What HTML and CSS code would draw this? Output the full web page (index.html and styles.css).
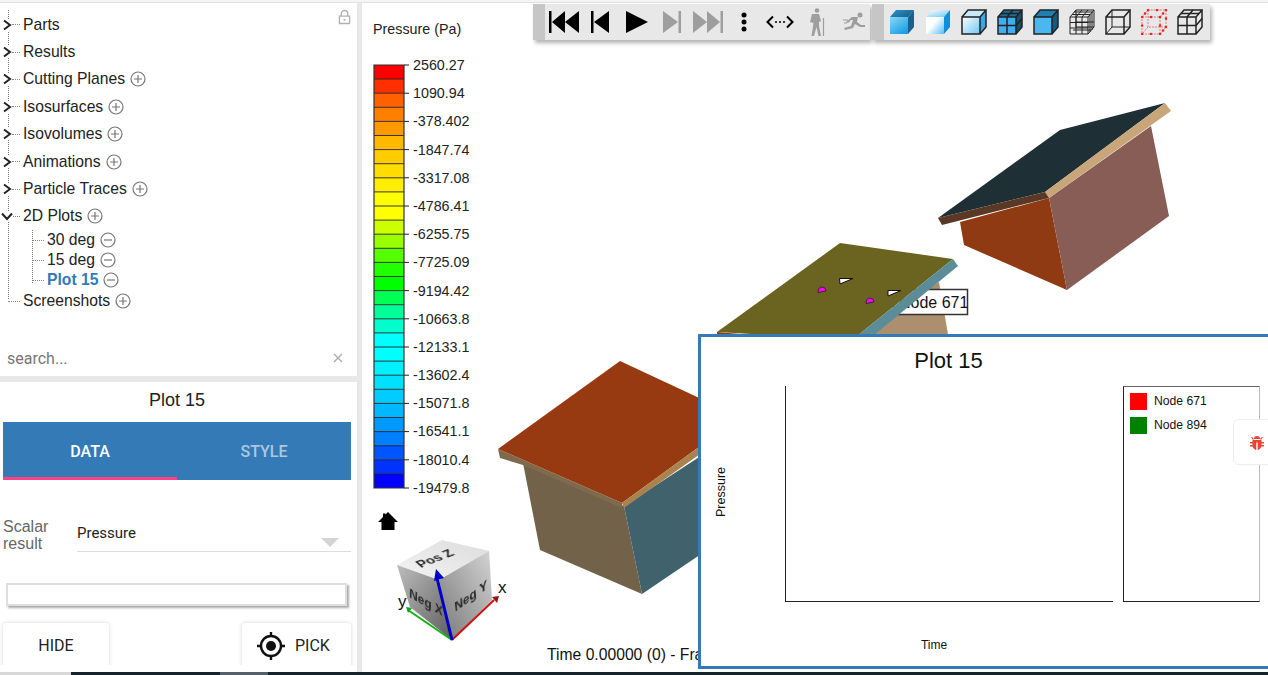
FILE: index.html
```html
<!DOCTYPE html>
<html lang="en">
<head>
<meta charset="utf-8">
<title>Plot 15</title>
<link rel="stylesheet" href="styles.css">
</head>
<body>
<svg class="defs" width="0" height="0" aria-hidden="true">
  <defs>
    <linearGradient id="gA" x1="0" y1="0" x2="0.7" y2="1"><stop offset="0" stop-color="#8ad6f8"/><stop offset="1" stop-color="#1c9fe4"/></linearGradient>
    <linearGradient id="gB" x1="0" y1="0" x2="1" y2="0.6"><stop offset="0" stop-color="#2f96c8"/><stop offset="1" stop-color="#17638c"/></linearGradient>
    <linearGradient id="gC" x1="0" y1="0.2" x2="1" y2="1"><stop offset="0" stop-color="#ffffff"/><stop offset="0.35" stop-color="#ffffff"/><stop offset="1" stop-color="#58bdf2"/></linearGradient>
    <linearGradient id="gD" x1="0" y1="0" x2="1" y2="1"><stop offset="0" stop-color="#ffffff"/><stop offset="1" stop-color="#6cc6f3"/></linearGradient>
    <linearGradient id="cubeTop" x1="0" y1="1" x2="1" y2="0"><stop offset="0" stop-color="#f4f4f4"/><stop offset="1" stop-color="#dcdcdc"/></linearGradient>
    <linearGradient id="cubeLeft" x1="0" y1="0" x2="1" y2="1"><stop offset="0" stop-color="#bdbdbd"/><stop offset="1" stop-color="#5e5e5e"/></linearGradient>
    <linearGradient id="cubeRight" x1="1" y1="0" x2="0" y2="1"><stop offset="0" stop-color="#d4d4d4"/><stop offset="1" stop-color="#777777"/></linearGradient>
    <symbol id="wire" viewBox="0 0 26 26"><path d="M1 8H19V25H1ZM1 8 7 1H25L19 8M25 1V18L19 25"/></symbol>
  </defs>
</svg>

<div class="topline"></div>
<div class="main">
  <aside class="sidebar">
    <section class="tree-panel">
      <svg class="lock" viewBox="0 0 14 16"><path class="lock-s" d="M3.5 7V4.5a3.5 3.5 0 0 1 7 0V7M1.5 7h11v8h-11z"/><rect class="lock-f" x="6" y="10" width="2" height="2"/></svg>
      <ul class="tree">
        <li class="row"><svg class="chev" viewBox="0 0 9 12"><path d="M1 1.5 7 6 1 10.5"/></svg><span class="conn"></span><span>Parts</span></li>
        <li class="row"><svg class="chev" viewBox="0 0 9 12"><path d="M1 1.5 7 6 1 10.5"/></svg><span class="conn"></span><span>Results</span></li>
        <li class="row"><svg class="chev" viewBox="0 0 9 12"><path d="M1 1.5 7 6 1 10.5"/></svg><span class="conn"></span><span>Cutting Planes</span><svg class="act" viewBox="0 0 16 16"><circle cx="8" cy="8" r="7"/><path d="M4 8h8M8 4v8"/></svg></li>
        <li class="row"><svg class="chev" viewBox="0 0 9 12"><path d="M1 1.5 7 6 1 10.5"/></svg><span class="conn"></span><span>Isosurfaces</span><svg class="act" viewBox="0 0 16 16"><circle cx="8" cy="8" r="7"/><path d="M4 8h8M8 4v8"/></svg></li>
        <li class="row"><svg class="chev" viewBox="0 0 9 12"><path d="M1 1.5 7 6 1 10.5"/></svg><span class="conn"></span><span>Isovolumes</span><svg class="act" viewBox="0 0 16 16"><circle cx="8" cy="8" r="7"/><path d="M4 8h8M8 4v8"/></svg></li>
        <li class="row"><svg class="chev" viewBox="0 0 9 12"><path d="M1 1.5 7 6 1 10.5"/></svg><span class="conn"></span><span>Animations</span><svg class="act" viewBox="0 0 16 16"><circle cx="8" cy="8" r="7"/><path d="M4 8h8M8 4v8"/></svg></li>
        <li class="row"><svg class="chev" viewBox="0 0 9 12"><path d="M1 1.5 7 6 1 10.5"/></svg><span class="conn"></span><span>Particle Traces</span><svg class="act" viewBox="0 0 16 16"><circle cx="8" cy="8" r="7"/><path d="M4 8h8M8 4v8"/></svg></li>
        <li class="row"><svg class="chev" viewBox="0 0 12 9"><path d="M1 1.5 6 7 11 1.5"/></svg><span class="conn"></span><span>2D Plots</span><svg class="act" viewBox="0 0 16 16"><circle cx="8" cy="8" r="7"/><path d="M4 8h8M8 4v8"/></svg></li>
        <li>
          <ul class="subtree">
            <li class="subrow"><span class="subconn"></span><span>30 deg</span><svg class="act" viewBox="0 0 16 16"><circle cx="8" cy="8" r="7"/><path d="M4 8h8"/></svg></li>
            <li class="subrow"><span class="subconn"></span><span>15 deg</span><svg class="act" viewBox="0 0 16 16"><circle cx="8" cy="8" r="7"/><path d="M4 8h8"/></svg></li>
            <li class="subrow"><span class="subconn"></span><span class="current">Plot 15</span><svg class="act" viewBox="0 0 16 16"><circle cx="8" cy="8" r="7"/><path d="M4 8h8"/></svg></li>
          </ul>
        </li>
        <li class="row last"><span class="conn long"></span><span>Screenshots</span><svg class="act" viewBox="0 0 16 16"><circle cx="8" cy="8" r="7"/><path d="M4 8h8M8 4v8"/></svg></li>
      </ul>
      <div class="search"><span>search...</span><svg class="clear" viewBox="0 0 10 10"><path d="M1 1 9 9M9 1 1 9"/></svg></div>
    </section>

    <section class="detail">
      <h2 class="detail-title">Plot 15</h2>
      <div class="tabs">
        <div class="tab active">DATA</div>
        <div class="tab">STYLE</div>
      </div>
      <div class="field">
        <div class="field-label">Scalar<br>result</div>
        <div class="select"><span>Pressure</span><i class="caret"></i></div>
      </div>
      <div class="inputbar"></div>
      <div class="buttons">
        <div class="btn hide">HIDE</div>
        <div class="btn pick">
          <svg class="target" viewBox="0 0 28 28"><circle class="t-ring" cx="14" cy="14" r="10"/><circle cx="14" cy="14" r="5"/><path class="t-ring" d="M14 0v5M14 23v5M0 14h5M23 14h5"/></svg>
          <span>PICK</span>
        </div>
      </div>
    </section>
  </aside>

  <main class="viewport">
    <svg class="scene" viewBox="362 3 906 669">
      <!-- top right house -->
      <polygon fill="#8f3a13" points="960,222 1049,198 1067,290 964,245"/>
      <polygon fill="#875d55" points="1049,198 1151,126 1169,216 1067,290"/>
      <polygon fill="#1e2f36" points="1060,130 1165,103 1045,192 938,218"/>
      <polygon fill="#c9a67a" points="1165,103 1171,111 1049,198 1045,192"/>
      <polygon fill="#5a3826" points="938,218 1045,192 1049,198 942,225"/>
      <!-- middle house -->
      <polygon fill="#ab8f6e" points="939,282 949,340 850,340"/>
      <rect class="tag" x="893.500" y="289.500" width="74" height="25"/>
      <text class="tag-text" x="899" y="308">Node 671</text>
      <polygon fill="#8f3a13" points="717,332 740,334 730,340 717,340"/>
      <polygon fill="#6b6320" points="840,243 953,259 852,340 717,332"/>
      <polygon fill="#5b8d99" points="953,259 958,266 868,340 852,340"/>
      <polygon class="flag" points="839.500,278.500 853,278.500 840,284"/>
      <polygon class="flag" points="888,290.500 901,290.500 888,296"/>
      <path class="dot" d="M818 292.500Q818 287 822 287Q826 287 826 291Z"/>
      <path class="dot" d="M866 303.500Q866 298 870 298Q874 298 874 302Z"/>
      <!-- front house -->
      <polygon fill="#73624a" points="523,463 624,506 642,594 540,550"/>
      <polygon fill="#3f626c" points="624,506 710,450 710,548 642,594"/>
      <polygon fill="#7f6a4d" points="498,449 622,503 622,508 523,465 500,458"/>
      <polygon fill="#973a12" points="620,361 710,403 710,439 622,503 498,449"/>
      <polygon fill="#a9824f" points="622,503 710,439 710,447 624,508"/>
      <!-- home -->
      <path fill="#000" d="M388 512 398 522H394.500V530H381.500V522H378L383 517V513.500H385.500V514.500Z"/>
      <!-- nav cube -->
      <polygon fill="url(#cubeTop)" points="397,565 442,540 489,551 439,580"/>
      <polygon fill="url(#cubeLeft)" points="397,565 439,580 452,640 410,607"/>
      <polygon fill="url(#cubeRight)" points="439,580 489,551 492,600 452,640"/>
      <text class="cube-text" transform="matrix(0.93 -0.36 0.75 0.66 421 568)">Pos Z</text>
      <text class="cube-text" transform="matrix(0.88 0.5 -0.05 1 409 597)">Neg X</text>
      <text class="cube-text" transform="matrix(0.86 -0.62 0.1 1 455 612)">Neg Y</text>
      <path class="axis-g" d="M452 640 408 610"/>
      <polygon fill="#16a016" points="406,607 412,608 408,613"/>
      <path class="axis-r" d="M452 640 494 600"/>
      <polygon fill="#a01010" points="492,597 499,596 497,603"/>
      <path class="axis-b" d="M452 640 437 578"/>
      <polygon fill="#0000c8" points="436,569 444,578 434,581 "/>
      <text class="axis-text" x="498" y="593">x</text>
      <text class="axis-text" x="398" y="607">y</text>
    </svg>

    <div class="legend">
      <div class="legend-title">Pressure (Pa)</div>
      <div class="legend-body">
        <svg class="legend-bar" viewBox="0 0 36 425">
          <rect x="1" y="1" width="30" height="14.100" fill="#ff0000"/><rect x="1" y="15.100" width="30" height="14.100" fill="#ff3000"/><rect x="1" y="29.200" width="30" height="14.100" fill="#ff6000"/><rect x="1" y="43.300" width="30" height="14.100" fill="#ff8000"/><rect x="1" y="57.400" width="30" height="14.100" fill="#ff9900"/><rect x="1" y="71.500" width="30" height="14.100" fill="#ffb800"/><rect x="1" y="85.600" width="30" height="14.100" fill="#ffcc00"/><rect x="1" y="99.700" width="30" height="14.100" fill="#ffdd00"/><rect x="1" y="113.800" width="30" height="14.100" fill="#ffee00"/><rect x="1" y="127.900" width="30" height="14.100" fill="#ffff00"/><rect x="1" y="142" width="30" height="14.100" fill="#ffff00"/><rect x="1" y="156.100" width="30" height="14.100" fill="#ccff00"/><rect x="1" y="170.200" width="30" height="14.100" fill="#99ff00"/><rect x="1" y="184.300" width="30" height="14.100" fill="#55ff00"/><rect x="1" y="198.400" width="30" height="14.100" fill="#22ff00"/><rect x="1" y="212.500" width="30" height="14.100" fill="#00ff00"/><rect x="1" y="226.600" width="30" height="14.100" fill="#00ff55"/><rect x="1" y="240.700" width="30" height="14.100" fill="#00ff99"/><rect x="1" y="254.800" width="30" height="14.100" fill="#00ffcc"/><rect x="1" y="268.900" width="30" height="14.100" fill="#00ffff"/><rect x="1" y="283" width="30" height="14.100" fill="#00ffff"/><rect x="1" y="297.100" width="30" height="14.100" fill="#00f0ff"/><rect x="1" y="311.200" width="30" height="14.100" fill="#00e0ff"/><rect x="1" y="325.300" width="30" height="14.100" fill="#00ccff"/><rect x="1" y="339.400" width="30" height="14.100" fill="#00b8ff"/><rect x="1" y="353.500" width="30" height="14.100" fill="#0099ff"/><rect x="1" y="367.600" width="30" height="14.100" fill="#0080ff"/><rect x="1" y="381.700" width="30" height="14.100" fill="#0055ff"/><rect x="1" y="395.800" width="30" height="14.100" fill="#0033ff"/><rect x="1" y="409.900" width="30" height="14.100" fill="#0000ff"/>
          <path class="band-lines" d="M1 15.100H31M1 29.200H31M1 43.300H31M1 57.400H31M1 71.500H31M1 85.600H31M1 99.700H31M1 113.800H31M1 127.900H31M1 142H31M1 156.100H31M1 170.200H31M1 184.300H31M1 198.400H31M1 212.500H31M1 226.600H31M1 240.700H31M1 254.800H31M1 268.900H31M1 283H31M1 297.100H31M1 311.200H31M1 325.300H31M1 339.400H31M1 353.500H31M1 367.600H31M1 381.700H31M1 395.800H31M1 409.900H31"/>
          <path class="band-frame" d="M1 1H31V424H1Z"/>
          <path class="band-ticks" d="M31 1H36M31 29.200H36M31 57.400H36M31 85.600H36M31 113.800H36M31 142H36M31 170.200H36M31 198.400H36M31 226.600H36M31 254.800H36M31 283H36M31 311.200H36M31 339.400H36M31 367.600H36M31 395.800H36M31 424H36"/>
        </svg>
        <div class="legend-labels">
          <span>2560.27</span><span>1090.94</span><span>-378.402</span><span>-1847.74</span><span>-3317.08</span><span>-4786.41</span><span>-6255.75</span><span>-7725.09</span><span>-9194.42</span><span>-10663.8</span><span>-12133.1</span><span>-13602.4</span><span>-15071.8</span><span>-16541.1</span><span>-18010.4</span><span>-19479.8</span>
        </div>
      </div>
    </div>

    <div class="status">Time 0.00000 (0) - Frame 0</div>

    <div class="toolbars">
      <div class="toolbar play">
        <div class="handle"></div>
        <svg class="ti t1" viewBox="0 0 30 22"><path d="M0 0H2.500V22H0ZM3 11 16 0V22ZM16 11 30 0V22Z"/></svg>
        <svg class="ti t2" viewBox="0 0 18 22"><path d="M0 0H2.500V22H0ZM3 11 18 0V22Z"/></svg>
        <svg class="ti t3" viewBox="0 0 22 22"><path d="M0 0 22 11 0 22Z"/></svg>
        <svg class="ti t4 off" viewBox="0 0 18 22"><path d="M15.500 0H18V22H15.500ZM0 0 15 11 0 22Z"/></svg>
        <svg class="ti t5 off" viewBox="0 0 30 22"><path d="M27.500 0H30V22H27.500ZM0 0 14 11 0 22ZM14 0 27 11 14 22Z"/></svg>
        <svg class="ti t6" viewBox="0 0 8 20"><circle cx="4" cy="3" r="2.500"/><circle cx="4" cy="10" r="2.500"/><circle cx="4" cy="17" r="2.500"/></svg>
        <svg class="ti t7" viewBox="0 0 28 14"><path class="arrows" d="M7 1.500 1.500 7 7 12.500M21 1.500 26.500 7 21 12.500"/><circle cx="10" cy="7" r="1"/><circle cx="14" cy="7" r="1"/><circle cx="18" cy="7" r="1"/></svg>
        <svg class="ti t8 off" viewBox="0 0 16 28"><circle cx="8" cy="2.500" r="2.300"/><path d="M3 6h7l2 7-2 1v4l2 10H9.500L7.500 19 5 28H2.500L4.500 15 1 14Z"/><path class="pole" d="M14.500 10V28"/></svg>
        <svg class="ti t9 off" viewBox="0 0 22 20"><circle cx="17" cy="3" r="2.500"/><path d="M9 5h6l-1 5 4 3h4v2h-5l-5-3-2 4-8 2-1-2 7-2 2-6-2 0-3 3-2-1Z"/><path class="pole" d="M0 8H5M1 11H4"/></svg>
      </div>
      <div class="toolbar cubes">
        <div class="handle"></div>
        <svg class="ci c1" viewBox="0 0 26 26"><polygon fill="url(#gA)" points="1,8 19,8 19,25 1,25"/><polygon fill="url(#gB)" points="1,8 7,1 25,1 19,8"/><polygon fill="#17638c" points="19,8 25,1 25,18 19,25"/></svg>
        <svg class="ci c2" viewBox="0 0 26 26"><polygon fill="url(#gC)" points="1,8 19,8 19,25 1,25"/><polygon fill="url(#gD)" points="1,8 7,1 25,1 19,8"/><polygon fill="#0e8fdc" points="19,8 25,1 25,18 19,25"/></svg>
        <svg class="ci c3" viewBox="0 0 26 26"><polygon fill="url(#gD)" points="1,8 19,8 19,25 1,25"/><polygon fill="#c9e8f8" points="1,8 7,1 25,1 19,8"/><polygon fill="#39a8e8" points="19,8 25,1 25,18 19,25"/><use class="line" href="#wire"/></svg>
        <svg class="ci c4" viewBox="0 0 26 26"><polygon fill="#3cb0ee" points="1,8 19,8 19,25 1,25"/><polygon fill="#1a6d9a" points="1,8 7,1 25,1 19,8"/><polygon fill="#14506f" points="19,8 25,1 25,18 19,25"/><use class="line" href="#wire"/><path class="line" d="M1 16.500H19M10 8V25M4 4.500H22M16 1 10 8M19 16.500 25 9.500"/></svg>
        <svg class="ci c5" viewBox="0 0 26 26"><polygon fill="#4ab8ee" points="1,8 19,8 19,25 1,25"/><polygon fill="#1f7fb0" points="1,8 7,1 25,1 19,8"/><polygon fill="#125a80" points="19,8 25,1 25,18 19,25"/><use class="line" href="#wire"/></svg>
        <svg class="ci c6" viewBox="0 0 26 26"><use class="line thin" href="#wire"/><path class="line thin" d="M1 13.500H19M1 19H19M7 8V25M13 8V25M3 5.500H21M5 3H23M13 1 7 8M19 1 13 8M21 5.500V23M23 3V21M7 1V18H25M4 21 22 21M7 13H25"/></svg>
        <svg class="ci c7" viewBox="0 0 26 26"><use class="line" href="#wire"/><path class="line thin" d="M7 1V18H25M7 18 1 25"/></svg>
        <svg class="ci c8" viewBox="0 0 26 26"><use class="line red" href="#wire"/><path class="line red" d="M7 1V18H25M7 18 1 25"/><path class="line reddot" d="M1 8h.1M10 8h.1M19 8h.1M1 16.500h.1M19 16.500h.1M1 25h.1M10 25h.1M19 25h.1M7 1h.1M16 1h.1M25 1h.1M25 9.500h.1M25 18h.1M4 4.500h.1M22 4.500h.1M22 21.500h.1"/></svg>
        <svg class="ci c9" viewBox="0 0 26 26"><use class="line" href="#wire"/><path class="line" d="M1 16.500H19M10 8V25M4 4.500H22M16 1 10 8M19 16.500 25 9.500"/></svg>
      </div>
    </div>

    <div class="plot">
      <h3 class="plot-title">Plot 15</h3>
      <div class="plot-body">
        <div class="y-label">Pressure</div>
        <div class="chart"></div>
        <div class="plot-legend">
          <div class="entry"><i class="swatch red"></i>Node 671</div>
          <div class="entry"><i class="swatch green"></i>Node 894</div>
        </div>
      </div>
      <div class="x-label">Time</div>
    </div>

    <div class="bug">
      <svg viewBox="0 0 16 16"><path d="M5 4a3 3 0 0 1 6 0ZM3.500 5h9v2H15v1.500h-2.500V10H15v1.500h-2.700C11.800 13.500 10 15 8.700 15V7.500H7.300V15C6 15 4.200 13.500 3.700 11.500H1V10h2.500V8.500H1V7h2.500ZM2 2l1 0 2 2-1 1ZM14 2l-1 0-2 2 1 1Z"/></svg>
    </div>
  </main>
</div>
<div class="foot"><span class="f1"></span><span class="f2"></span><span class="f3"></span><span class="f4"></span></div>
</body>
</html>
```

FILE: styles.css
```css
* { box-sizing: border-box; }
html, body { margin: 0; padding: 0; }
body {
  width: 1268px;
  height: 675px;
  overflow: hidden;
  display: flex;
  flex-direction: column;
  background: #fff;
  font-family: "Liberation Sans", Arial, sans-serif;
  color: #222;
}
.defs { position: absolute; }
.topline { height: 3px; background: #f4f4f4; border-bottom: 1px solid #e2e2e2; flex: none; }
.main { flex: 1; display: flex; min-height: 0; }
.foot { height: 3px; flex: none; display: flex; }
.f1 { width: 71px; background: #d8d8d8; }
.f2 { width: 149px; background: #17232b; }
.f3 { width: 48px; background: #55606a; }
.f4 { flex: 1; background: #17232b; }

/* sidebar */
.sidebar {
  width: 362px;
  flex: none;
  border-right: 5px solid #e8e8e8;
  display: flex;
  flex-direction: column;
}
.tree-panel {
  flex: none;
  position: relative;
  display: flex;
  flex-direction: column;
  border-bottom: 6px solid #e8e8e8;
  height: 379px;
}
.lock { position: absolute; left: 338px; top: 6px; width: 13px; height: 16px; }
.lock-s { fill: none; stroke: #b0b0b0; stroke-width: 1.400; }
.lock-f { fill: #b0b0b0; }
.tree { list-style: none; margin: 0; padding: 8px 0 0; position: relative; font-size: 15.700px; }
.tree::before {
  content: "";
  position: absolute;
  left: 8px;
  top: 7px;
  height: 289px;
  border-left: 1px dotted #777;
}
.row { height: 27.400px; display: flex; align-items: center; position: relative; }
.row.last { height: 22px; }
.chev {
  width: 9px;
  height: 12px;
  margin-left: 3px;
  flex: none;
  background: #fff;
}
.chev path { fill: none; stroke: #222; stroke-width: 2; }
.row:nth-child(8) .chev { width: 12px; height: 9px; margin-left: 1px; }
.row:nth-child(8) .conn { width: 7px; }
.conn { width: 8px; height: 0; margin: 0 3px 0 0; border-top: 1px dotted #888; flex: none; }
.conn.long { width: 12px; margin-left: 8px; }
.act { width: 16px; height: 16px; margin-left: 5px; flex: none; }
.act circle, .act path { fill: none; stroke: #777; stroke-width: 1.200; }
.subtree { list-style: none; margin: 0; padding: 0 0 0 32px; position: relative; }
.subtree::before {
  content: "";
  position: absolute;
  left: 32px;
  top: 0;
  height: 53px;
  border-left: 1px dotted #777;
}
.subrow { height: 20px; display: flex; align-items: center; }
.subconn { width: 11px; margin: 0 3px 0 1px; border-top: 1px dotted #888; flex: none; }
.current { color: #337ab7; font-weight: 700; }
.search {
  margin-top: auto;
  height: 36px;
  display: flex;
  align-items: center;
  justify-content: space-between;
  padding: 0 14px 0 7px;
  font-family: Roboto, sans-serif;
  font-size: 16px;
  color: #777;
}
.clear { width: 10px; height: 10px; }
.clear path { stroke: #aaa; stroke-width: 1.300; fill: none; }

.detail { flex: 1; display: flex; flex-direction: column; padding: 0 6px 0 3px; position: relative; min-height: 0; }
.detail-title { margin: 7px 0 0; font-size: 18px; font-weight: 400; line-height: 22px; text-align: center; height: 33px; }
.tabs { height: 58px; display: flex; background: #337ab7; flex: none; }
.tab {
  flex: 1;
  display: flex;
  align-items: center;
  justify-content: center;
  font-family: Roboto, sans-serif;
  font-size: 16px;
  font-weight: 500;
  color: rgba(255, 255, 255, 0.6);
}
.tab.active { color: #fff; border-bottom: 3px solid #ff4081; padding-top: 3px; }
.field { display: flex; margin-top: 37px; height: 35px; }
.field-label { width: 74px; font-size: 16px; line-height: 17px; color: #666; flex: none; padding-top: 1px; }
.select {
  flex: 1;
  border-bottom: 1px solid #ddd;
  font-family: Roboto, sans-serif;
  font-size: 15px;
  padding-top: 7px;
  position: relative;
}
.caret {
  position: absolute;
  right: 12px;
  top: 21px;
  width: 0;
  height: 0;
  border-left: 9px solid transparent;
  border-right: 9px solid transparent;
  border-top: 9px solid #d4d4d4;
}
.inputbar {
  margin: 31px 0 0 3px;
  width: 341px;
  height: 23px;
  flex: none;
  border: 2px solid #dedede;
  background: #fff;
  box-shadow: 2px 2px 2px #aaa;
}
.buttons {
  display: flex;
  justify-content: space-between;
  margin: 13px -6px 0 -3px;
  padding: 4px 6px 0 3px;
  height: 46px;
  flex: none;
  overflow: hidden;
}
.btn {
  height: 52px;
  background: #fff;
  border-radius: 3px;
  box-shadow: 0 0 4px rgba(0, 0, 0, 0.16);
  display: flex;
  align-items: flex-start;
  padding-top: 13px;
  font-family: Roboto, sans-serif;
  font-size: 16px;
  color: #222;
}
.hide { width: 106px; justify-content: center; }
.pick { width: 109px; padding-left: 15px; }
.target { width: 28px; height: 28px; margin-top: -4px; margin-right: 10px; flex: none; }
.target circle { fill: #111; }
.target .t-ring { fill: none; stroke: #111; stroke-width: 2.400; }

/* viewport */
.viewport { flex: 1; position: relative; overflow: hidden; background: #fff; }
.scene { position: absolute; left: 0; top: 0; width: 906px; height: 669px; }
.tag { fill: #fff; stroke: #333; stroke-width: 1.500; }
.tag-text { font-size: 16px; fill: #111; font-family: "Liberation Sans", sans-serif; }
.flag { fill: #fff; stroke: #111; stroke-width: 1; }
.dot { fill: #f0f; stroke: #222; stroke-width: 0.800; }
.cube-text { font-size: 13.500px; font-weight: 700; fill: #2a2a2a; font-family: "Liberation Sans", sans-serif; filter: blur(0.4px); }
.axis-g { stroke: #16b016; stroke-width: 2; }
.axis-r { stroke: #d01010; stroke-width: 2; }
.axis-b { stroke: #0000c8; stroke-width: 3; }
.axis-text { font-size: 17px; fill: #111; font-family: "Liberation Sans", sans-serif; }

.legend { position: relative; margin: 0 0 0 11px; width: 120px; font-size: 14.300px; color: #222; padding-top: 17px; }
.legend-title { line-height: 18px; height: 27px; }
.legend-body { display: flex; height: 425px; }
.legend-bar { width: 36px; height: 425px; flex: none; display: block; margin-top: 17px; }
.legend-labels {
  margin: 10px 0 0 4px;
  height: 439px;
  display: flex;
  flex-direction: column;
  justify-content: space-between;
  line-height: 16px;
  white-space: nowrap;
}
.band-lines { stroke: #222; stroke-width: 0.900; fill: none; }
.band-frame { stroke: #333; stroke-width: 1.200; fill: none; }
.band-ticks { stroke: #222; stroke-width: 1; fill: none; }

.status { position: absolute; left: 185px; top: 643px; font-size: 15.700px; color: #111; white-space: nowrap; }

.toolbars { position: absolute; left: 171px; top: 1px; display: flex; gap: 2px; }
.toolbar { height: 36px; background: #e8e8e8; display: flex; align-items: center; box-shadow: 2px 3px 4px rgba(0, 0, 0, 0.3); }
.toolbar.play { width: 337px; }
.toolbar.cubes { width: 338px; }
.handle { width: 12px; height: 36px; background: #c6c6c6; flex: none; margin-right: 4px; }
.ti { flex: none; display: block; fill: #000; }
.ti.off { fill: #9e9e9e; }
.t1 { width: 30px; height: 22px; }
.t2 { width: 18px; height: 22px; margin-left: 12px; }
.t3 { width: 22px; height: 22px; margin-left: 17px; }
.t4 { width: 18px; height: 22px; margin-left: 15px; }
.t5 { width: 30px; height: 22px; margin-left: 12px; }
.t6 { width: 8px; height: 20px; margin-left: 17px; }
.t7 { width: 28px; height: 14px; margin-left: 18px; }
.t8 { width: 16px; height: 28px; margin-left: 15px; }
.t9 { width: 22px; height: 20px; margin-left: 18px; }
.arrows { fill: none; stroke: #000; stroke-width: 2; }
.pole { fill: none; stroke: #9e9e9e; stroke-width: 1.200; }
.ci { width: 26px; height: 26px; flex: none; display: block; margin-right: 10px; }
.c1 { margin-left: 1px; }
.line { fill: none; stroke: #222; stroke-width: 1.500; }
.line.thin { stroke-width: 1; }
.line.red { stroke: #e08080; stroke-width: 1; stroke-dasharray: 2 1; }
.line.reddot { stroke: #ee2020; stroke-width: 2.500; stroke-linecap: round; }

/* floating plot window */
.plot {
  position: absolute;
  left: 336px;
  top: 331px;
  width: 600px;
  height: 335px;
  background: #fff;
  border: 3px solid #337ab7;
}
.plot-title { margin: 0; width: 495px; text-align: center; font-size: 22px; font-weight: 400; line-height: 26px; padding-top: 11px; height: 49px; color: #111; }
.plot-body { display: flex; position: relative; height: 216px; }
.y-label {
  position: absolute;
  left: 0;
  top: 104px;
  width: 40px;
  text-align: center;
  font-size: 12.500px;
  white-space: nowrap;
  transform: rotate(-90deg);
  color: #111;
}
.chart { margin-left: 84px; width: 328px; border-left: 1px solid #222; border-bottom: 1px solid #222; }
.plot-legend {
  margin-left: 10px;
  width: 137px;
  border-left: 1px solid #222;
  border-bottom: 1px solid #222;
  border-top: 1px solid #666;
  border-right: 1px solid #bbb;
  padding: 5px 0 0 6px;
  font-size: 12.200px;
  color: #111;
}
.entry { display: flex; align-items: center; height: 18px; margin-bottom: 6px; }
.swatch { width: 17px; height: 17px; margin-right: 7px; flex: none; }
.swatch.red { background: #f00; }
.swatch.green { background: #008000; }
.x-label { width: 466px; text-align: center; font-size: 12px; margin-top: 36px; color: #111; }

.bug {
  position: absolute;
  left: 871px;
  top: 416px;
  width: 40px;
  height: 46px;
  background: #fff;
  border: 1px solid #eee;
  border-radius: 6px;
  padding: 15px 0 0 15px;
}
.bug svg { width: 16px; height: 16px; display: block; fill: #e8452c; }
```
